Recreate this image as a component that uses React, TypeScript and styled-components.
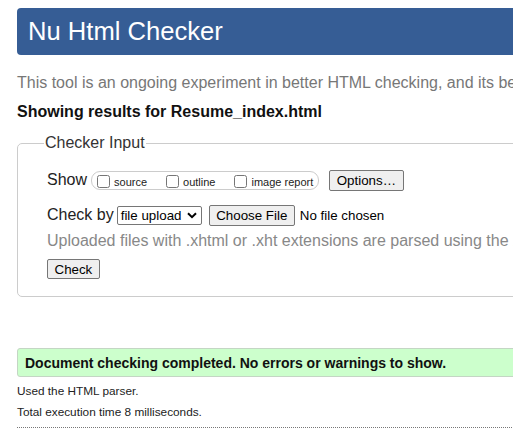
import React from "react";
import styled, { createGlobalStyle } from "styled-components";

const Global = createGlobalStyle`
  html, body { margin: 0; padding: 0; overflow: hidden; background: #fff; }
  body { font-family: "Liberation Sans", Arial, sans-serif; color: #222; }
`;

const Page = styled.div`
  width: 1100px;
  padding: 8px 0 0 17px;
  box-sizing: border-box;
`;

const Header = styled.h1`
  margin: 0;
  height: 47px;
  line-height: 47px;
  padding-left: 11px;
  background: #365d95;
  color: #fff;
  border-radius: 4px;
  font-size: 25.6px;
  font-weight: normal;
`;

const Intro = styled.p`
  margin: 18px 0 0;
  font-size: 16px;
  line-height: 20px;
  color: #777;
  white-space: nowrap;
`;

const ResultsFor = styled.p`
  margin: 9px 0 0;
  font-size: 16px;
  line-height: 20px;
  font-weight: bold;
  color: #111;
`;

const Fieldset = styled.fieldset`
  margin: 12px 0 0;
  padding: 17px 0 17px 29px;
  border: 1px solid #ccc;
  border-radius: 5px;
  min-width: 0;
`;

const Legend = styled.legend`
  padding: 0 1px;
  margin-left: -3px;
  font-size: 16px;
  line-height: 18px;
  color: #333;
`;

const Row = styled.div<{ $top?: number }>`
  display: flex;
  align-items: center;
  height: 22px;
  margin-top: ${(p) => p.$top ?? 0}px;
  font-size: 16px;
`;

const RowLabel = styled.span`
  font-size: 16px;
  color: #222;
`;

const OptionGroup = styled.div`
  display: flex;
  align-items: flex-end;
  height: 17px;
  margin-left: 4px;
  padding: 0 5px 0 5px;
  border: 1px solid #ccc;
  border-radius: 9px;
  gap: 19px;
`;

const OptionItem = styled.label`
  display: flex;
  align-items: flex-end;
  font-size: 11px;
  line-height: 13px;
  color: #222;
`;

const Checkbox = styled.input`
  width: 13px;
  height: 13px;
  margin: 0 4px 1px 0;
`;

const Button = styled.button<{ $h?: number }>`
  height: ${(p) => p.$h ?? 21}px;
  padding: 0 6.5px;
  margin: 0;
  font-family: "Liberation Sans", Arial, sans-serif;
  font-size: 13.33px;
  color: #000;
  background: #efefef;
  border: 1px solid #767676;
  border-radius: 2px;
`;

const GapButton = styled(Button)<{ $ml: number }>`
  margin-left: ${(p) => p.$ml}px;
`;

const SelectBox = styled.div`
  display: flex;
  align-items: center;
  justify-content: space-between;
  box-sizing: border-box;
  width: 85px;
  height: 19px;
  margin-left: 3px;
  padding: 0 4px 0 3px;
  border: 1px solid #767676;
  border-radius: 2px;
  font-size: 13.33px;
  color: #000;
  background: #fff;
`;

const FileName = styled.span`
  margin-left: 5px;
  font-size: 13.33px;
  color: #000;
`;

const Hint = styled.p`
  margin: 6px 0 0;
  font-size: 16px;
  line-height: 18px;
  color: #888;
  white-space: nowrap;
`;

const CheckRow = styled.div`
  margin-top: 9px;
  display: flex;
`;

const Success = styled.div`
  margin-top: 51px;
  height: 27px;
  display: flex;
  align-items: center;
  padding-left: 7px;
  background: #ccffcc;
  border: 1px solid #c4d6c4;
  border-radius: 3px;
  font-size: 14px;
  font-weight: bold;
  color: #111;
`;

const Note = styled.p<{ $top: number }>`
  margin: ${(p) => p.$top}px 0 0;
  font-size: 11.8px;
  line-height: 18px;
  color: #222;
`;

const Divider = styled.div`
  margin-top: 6px;
  border-top: 1px dotted #777;
`;

const Chevron = () => (
  <svg width="10" height="7" viewBox="0 0 10 7">
    <path d="M1 1.2 L5 5.2 L9 1.2" fill="none" stroke="#000" strokeWidth="2" />
  </svg>
);

export default function App() {
  return (
    <>
      <Global />
      <Page>
        <Header>Nu Html Checker</Header>
        <Intro>
          This tool is an ongoing experiment in better HTML checking, and its behavior remains subject to change
        </Intro>
        <ResultsFor>Showing results for Resume_index.html</ResultsFor>
        <Fieldset>
          <Legend>Checker Input</Legend>
          <Row>
            <RowLabel>Show</RowLabel>
            <OptionGroup>
              <OptionItem>
                <Checkbox type="checkbox" />
                source
              </OptionItem>
              <OptionItem>
                <Checkbox type="checkbox" />
                outline
              </OptionItem>
              <OptionItem>
                <Checkbox type="checkbox" />
                image report
              </OptionItem>
            </OptionGroup>
            <GapButton $ml={10}>Options…</GapButton>
          </Row>
          <Row $top={13}>
            <RowLabel>Check by</RowLabel>
            <SelectBox>
              <span>file upload</span>
              <Chevron />
            </SelectBox>
            <GapButton $ml={7}>Choose File</GapButton>
            <FileName>No file chosen</FileName>
          </Row>
          <Hint>Uploaded files with .xhtml or .xht extensions are parsed using the XML parser.</Hint>
          <CheckRow>
            <Button $h={20}>Check</Button>
          </CheckRow>
        </Fieldset>
        <Success>Document checking completed. No errors or warnings to show.</Success>
        <Note $top={5}>Used the HTML parser.</Note>
        <Note $top={3}>Total execution time 8 milliseconds.</Note>
        <Divider />
      </Page>
    </>
  );
}
